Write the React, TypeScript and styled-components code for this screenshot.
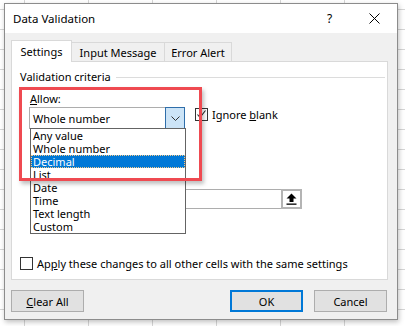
import React from "react";
import styled, { createGlobalStyle } from "styled-components";

const GlobalStyle = createGlobalStyle`
  html, body {
    margin: 0;
    padding: 0;
  }
  body {
    width: 405px;
    height: 326px;
    overflow: hidden;
    background-color: #fff;
    background-image: linear-gradient(to right, #d6d6d6 1px, transparent 1px),
      linear-gradient(to bottom, #d6d6d6 1px, transparent 1px);
    background-size: 64px 20px;
    background-position: 24px 9px;
    font-family: "Segoe UI", "Noto Sans", sans-serif;
    font-size: 11px;
    color: #000;
  }
`;

const items = [
	"Any value",
	"Whole number",
	"Decimal",
	"List",
	"Date",
	"Time",
	"Text length",
	"Custom",
];

function App(): JSX.Element {
	return (
		<>
			<GlobalStyle />
			<Screen>
				<Dialog>
					<TitleBar>
						<Title>Data Validation</Title>
						<CaptionButton>?</CaptionButton>
						<CaptionButton>
							<svg width="11" height="11" viewBox="0 0 11 11">
								<path d="M0.5 0.5 L10.5 10.5 M10.5 0.5 L0.5 10.5" stroke="#000" strokeWidth="1" />
							</svg>
						</CaptionButton>
					</TitleBar>
					<Body>
						<Tabs>
							<Tab $active $w={61}>Settings</Tab>
							<Tab $w={94}>Input Message</Tab>
							<Tab $w={68}>Error Alert</Tab>
						</Tabs>
						<Panel>
							<Legend>
								<span>Validation criteria</span>
								<LegendLine />
							</Legend>
							<AllowLabel>
								<u>A</u>llow:
							</AllowLabel>
							<AllowRow>
								<ComboWrap>
									<Combo>
										<ComboText>Whole number</ComboText>
										<ComboButton>
											<svg width="9" height="5" viewBox="0 0 9 5">
												<path d="M0.5 0.5 L4.5 4.5 L8.5 0.5" fill="none" stroke="#333" strokeWidth="1" />
											</svg>
										</ComboButton>
									</Combo>
									<List>
										{items.map((it) => (
											<ListItem key={it} $selected={it === "Decimal"}>
												{it}
											</ListItem>
										))}
									</List>
								</ComboWrap>
								<CheckRow>
									<CheckBox>
										<svg width="11" height="11" viewBox="0 0 11 11">
											<path d="M1.5 5.5 L4 8.5 L9.5 1.5" fill="none" stroke="#222" strokeWidth="1.1" />
										</svg>
									</CheckBox>
									<span>
										Ignore <u>b</u>lank
									</span>
								</CheckRow>
							</AllowRow>
							<RefField>
								<RefButton>
									<svg width="11" height="12" viewBox="0 0 11 12">
										<path d="M5.5 0.5 L10.5 5.5 L7.5 5.5 L7.5 9 L3.5 9 L3.5 5.5 L0.5 5.5 Z" fill="#000" />
										<rect x="0.5" y="10.5" width="10" height="1.3" fill="#000" />
									</svg>
								</RefButton>
							</RefField>
							<ApplyRow>
								<CheckBox />
								<span>
									Ap<u>p</u>ly these changes to all other cells with the same settings
								</span>
							</ApplyRow>
							<Highlight />
						</Panel>
						<Buttons>
							<Button>
								<u>C</u>lear All
							</Button>
							<Spacer />
							<Button $primary>OK</Button>
							<Button>Cancel</Button>
						</Buttons>
					</Body>
				</Dialog>
			</Screen>
		</>
	);
}

const Screen = styled.div`
	padding: 3px 0 0 4px;
`;

const Dialog = styled.div`
	width: 392px;
	height: 315px;
	border: 1px solid #8c8c8c;
	background: #f0f0f0;
	box-shadow: 1px 2px 5px rgba(0, 0, 0, 0.25);
	display: flex;
	flex-direction: column;
`;

const TitleBar = styled.div`
	height: 29px;
	background: #fff;
	display: flex;
	align-items: center;
	padding-left: 8px;
`;

const Title = styled.div`
	flex: 1;
	font-size: 11.5px;
`;

const CaptionButton = styled.div`
	width: 45px;
	height: 29px;
	display: flex;
	align-items: center;
	justify-content: center;
	font-size: 12px;
`;

const Body = styled.div`
	flex: 1;
	display: flex;
	flex-direction: column;
	padding: 7px 9px 0 6px;
`;

const Tabs = styled.div`
	display: flex;
	align-items: flex-end;
	height: 22px;
	margin-bottom: -1px;
	position: relative;
	z-index: 1;
`;

const Tab = styled.div<{ $active?: boolean; $w: number }>`
	width: ${(p) => p.$w}px;
	height: ${(p) => (p.$active ? "22px" : "20px")};
	box-sizing: border-box;
	border: 1px solid #d9d9d9;
	border-bottom: ${(p) => (p.$active ? "none" : "1px solid #d9d9d9")};
	margin-left: ${(p) => (p.$active ? "0" : "-1px")};
	background: ${(p) => (p.$active ? "#fff" : "#f0f0f0")};
	display: flex;
	align-items: center;
	justify-content: center;
	padding-bottom: ${(p) => (p.$active ? "1px" : "0")};
`;

const Panel = styled.div`
	position: relative;
	background: #fff;
	border: 1px solid #d9d9d9;
	padding: 6px 0 0 8px;
	box-sizing: border-box;
	height: 219px;
	display: flex;
	flex-direction: column;
`;

const Legend = styled.div`
	display: flex;
	align-items: center;
	gap: 5px;
	height: 16px;
	padding-right: 2px;
`;

const LegendLine = styled.div`
	flex: 1;
	height: 1px;
	background: #dcdcdc;
	margin-top: 2px;
`;

const AllowLabel = styled.div`
	margin: 7px 0 0 10px;
	height: 15px;
	line-height: 15px;
`;

const AllowRow = styled.div`
	display: flex;
	align-items: flex-start;
	margin-left: 9px;
	gap: 10px;
	height: 23px;
	margin-top: 1px;
`;

const ComboWrap = styled.div`
	position: relative;
	z-index: 2;
`;

const Combo = styled.div`
	width: 156px;
	height: 22px;
	box-sizing: border-box;
	border: 1px solid #adadad;
	background: #fff;
	display: flex;
	align-items: stretch;
`;

const ComboText = styled.div`
	flex: 1;
	padding-left: 3px;
	display: flex;
	align-items: center;
`;

const ComboButton = styled.div`
	width: 18px;
	margin: -1px -1px -1px 0;
	border: 1px solid #2f6eaa;
	background: #cce4f7;
	display: flex;
	align-items: center;
	justify-content: center;
`;

const List = styled.div`
	position: absolute;
	left: 1px;
	top: 21px;
	width: 156px;
	box-sizing: border-box;
	border: 1px solid #646464;
	background: #fff;
	display: flex;
	flex-direction: column;
`;

const ListItem = styled.div<{ $selected?: boolean }>`
	height: 13px;
	line-height: 13px;
	padding-left: 2px;
	background: ${(p) => (p.$selected ? "#0078d7" : "transparent")};
	color: ${(p) => (p.$selected ? "#fff" : "#000")};
	outline: ${(p) => (p.$selected ? "1px dotted #f3c98a" : "none")};
	outline-offset: -1px;
`;

const CheckRow = styled.div`
	display: flex;
	align-items: center;
	gap: 4px;
	margin-top: 1px;
	height: 13px;
`;

const CheckBox = styled.div`
	width: 13px;
	height: 13px;
	box-sizing: border-box;
	border: 1px solid #333;
	background: #fff;
	display: flex;
	align-items: center;
	justify-content: center;
	flex-shrink: 0;
`;

const RefField = styled.div`
	margin: 59px 0 0 10px;
	width: 272px;
	height: 20px;
	box-sizing: border-box;
	border: 1px solid #adadad;
	border-right: none;
	background: #fff;
	display: flex;
	justify-content: flex-end;
`;

const RefButton = styled.div`
	width: 21px;
	height: 20px;
	margin-top: -1px;
	box-sizing: border-box;
	border: 2px solid #b4b4b4;
	background: #fff;
	display: flex;
	align-items: center;
	justify-content: center;
`;

const ApplyRow = styled.div`
	display: flex;
	align-items: center;
	gap: 4px;
	margin-top: 48px;
	height: 13px;
`;

const Highlight = styled.div`
	position: absolute;
	left: 7px;
	top: 25px;
	width: 183px;
	height: 94px;
	box-sizing: border-box;
	border: 3px solid #ef4a51;
	box-shadow: 2px 3px 4px rgba(0, 0, 0, 0.25);
	z-index: 3;
	pointer-events: none;
`;

const Buttons = styled.div`
	display: flex;
	margin-top: 10px;
	padding-right: 1px;
	gap: 11px;
`;

const Spacer = styled.div`
	flex: 1;
`;

const Button = styled.div<{ $primary?: boolean }>`
	width: 73px;
	height: 22px;
	box-sizing: border-box;
	border: ${(p) => (p.$primary ? "2px solid #0078d7" : "1px solid #adadad")};
	background: #e1e1e1;
	display: flex;
	align-items: center;
	justify-content: center;
`;

export default App;
